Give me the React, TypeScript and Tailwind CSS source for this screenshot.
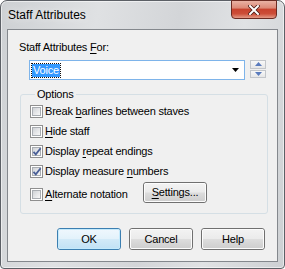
import React from "react"

// Win7 "Staff Attributes" dialog

function U({ children }: { children: React.ReactNode }) {
  return <span className="underline underline-offset-[2px] decoration-[1px]">{children}</span>
}

function CheckBox({ checked }: { checked?: boolean }) {
  return (
    <span className="relative w-[13px] h-[13px] shrink-0 border border-[#8f8f8f] bg-white p-px flex">
      <span className="flex-1 border border-[#a9adb2] bg-[linear-gradient(135deg,#cfd2d6_0%,#e6e7e9_55%,#f7f7f7_100%)]" />
      {checked && (
        <svg className="absolute left-[1px] top-[1px]" width="10" height="10" viewBox="0 0 10 10">
          <path d="M1.5 4.8 L3.8 7.4 L8.6 1.2" fill="none" stroke="#4a5f97" strokeWidth="1.8" strokeLinejoin="miter" />
        </svg>
      )}
    </span>
  )
}

function Btn({ children, def, w = "w-[64px]", h = "h-[22px]" }: { children: React.ReactNode; def?: boolean; w?: string; h?: string }) {
  return (
    <div className={`${w} ${h} rounded-[3px] border ${def ? "border-[#3c7fb1]" : "border-[#707070]"}`}>
      <div
        className={`h-full rounded-[2px] border ${def ? "border-[#c4eafc] bg-[linear-gradient(#eef7fd_0%,#e3f2fb_48%,#d2eaf8_52%,#c3e2f5_100%)]" : "border-[#fcfcfc] bg-[linear-gradient(#f2f2f2_0%,#ebebeb_48%,#dddddd_52%,#cfcfcf_100%)]"} flex items-center justify-center text-[11px] text-black`}
      >
        {children}
      </div>
    </div>
  )
}

export default function App() {
  return (
    <div className="w-[285px] h-[269px] bg-white font-['Liberation_Sans',Arial,sans-serif]">
      <div className="w-full h-full flex flex-col rounded-t-[7px] rounded-b-[4px] border border-[#5c6066] bg-[linear-gradient(100deg,#cdd0d3_0%,#dfe1e3_30%,#d3d5d8_55%,#e0e2e4_75%,#cdd0d3_100%)] shadow-[inset_0_0_0_1px_rgba(255,255,255,0.55)] px-[6px] pb-[6px]">
        {/* title bar */}
        <div className="h-[28px] flex items-start justify-between">
          <span className="pl-[1px] pt-[7px] text-[12px] leading-[14px] text-black [text-shadow:0_0_8px_rgba(255,255,255,0.95)]">
            Staff Attributes
          </span>
          <div className="w-[46px] h-[19px] -mt-px mr-px rounded-b-[4px] border border-[#6b2b22] bg-[linear-gradient(#e9b2a4_0%,#dc8a78_40%,#c8432e_50%,#cc4e38_75%,#e49a86_100%)] flex items-center justify-center">
            <svg width="12" height="10" viewBox="0 0 12 10">
              <path d="M2 1 L10 9 M10 1 L2 9" stroke="#4a1c16" strokeWidth="3.6" strokeLinecap="square" />
              <path d="M2 1 L10 9 M10 1 L2 9" stroke="#ffffff" strokeWidth="2" strokeLinecap="square" />
            </svg>
          </div>
        </div>

        {/* client area */}
        <div className="flex-1 border border-[#84888d] bg-[#f0f0f0] flex flex-col px-[11px] text-[11px] tracking-[-0.2px] text-black">
          <div className="pt-[10px] leading-[15px]">
            Staff Attributes <U>F</U>or:
          </div>

          <div className="mt-[5px] ml-[10px] flex items-start gap-[5px]">
            <div className="w-[217px] h-[20px] border border-[#7eb4ea] bg-white flex items-center pl-[2px] pr-[5px]">
              <span className="bg-[#3399ff] text-white leading-[13px] px-px outline outline-1 outline-dotted outline-[#111]">Voice</span>
              <span className="flex-1" />
              <svg width="7" height="4" viewBox="0 0 7 4">
                <path d="M0 0 H7 L3.5 4 Z" fill="#000" />
              </svg>
            </div>
            <div className="w-[16px] h-[18px] flex flex-col gap-px">
              <div className="flex-1 border border-[#c3c6ca] bg-[linear-gradient(#f8f8f8,#e7e7e7)] flex items-center justify-center">
                <svg width="7" height="4" viewBox="0 0 7 4">
                  <path d="M0 4 H7 L3.5 0 Z" fill="#5a7bbd" />
                </svg>
              </div>
              <div className="flex-1 border border-[#c3c6ca] bg-[linear-gradient(#f8f8f8,#e7e7e7)] flex items-center justify-center">
                <svg width="7" height="4" viewBox="0 0 7 4">
                  <path d="M0 0 H7 L3.5 4 Z" fill="#5a7bbd" />
                </svg>
              </div>
            </div>
          </div>

          <fieldset className="mt-[7px] ml-px w-[248px] rounded-[3px] border border-[#d5dfe5] pl-[9px] pb-[10px] flex flex-col gap-[2px]">
            <legend className="ml-[5px] px-[2px] leading-[15px]">Options</legend>
            <label className="h-[18px] flex items-center gap-[2px]">
              <CheckBox />
              <span>Break <U>b</U>arlines between staves</span>
            </label>
            <label className="h-[18px] flex items-center gap-[2px]">
              <CheckBox />
              <span><U>H</U>ide staff</span>
            </label>
            <label className="h-[18px] flex items-center gap-[2px]">
              <CheckBox checked />
              <span>Display <U>r</U>epeat endings</span>
            </label>
            <label className="h-[18px] flex items-center gap-[2px]">
              <CheckBox checked />
              <span>Display measure <U>n</U>umbers</span>
            </label>
            <div className="flex items-start">
              <label className="w-[113px] h-[18px] mt-[3px] flex items-center gap-[2px]">
                <CheckBox />
                <span><U>A</U>lternate notation</span>
              </label>
              <Btn h="h-[21px]">
                <span><U>S</U>ettings...</span>
              </Btn>
            </div>
          </fieldset>

          <div className="mt-[14px] pr-px flex justify-end gap-[8px]">
            <Btn def>OK</Btn>
            <Btn>Cancel</Btn>
            <Btn>Help</Btn>
          </div>
        </div>
      </div>
    </div>
  )
}
